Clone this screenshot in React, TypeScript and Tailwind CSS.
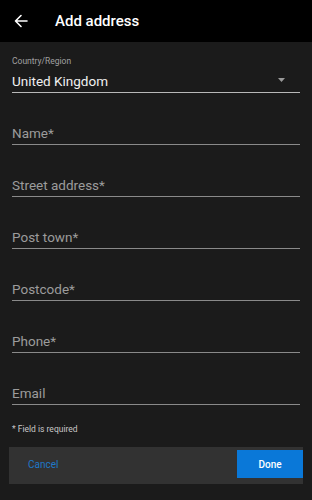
import React from "react";

const fields = ["Name*", "Street address*", "Post town*", "Postcode*", "Phone*", "Email"];

export default function App() {
  return (
    <div
      className="w-[312px] h-[500px] bg-[#1b1b1b] flex flex-col overflow-hidden"
      style={{ fontFamily: "Roboto, 'Liberation Sans', sans-serif" }}
    >
      <div className="h-[42px] bg-black flex items-center shrink-0">
        <svg className="ml-[14px]" width="14" height="14" viewBox="0 0 14 14" fill="none">
          <path d="M13 7H1.5M7 1.5L1.5 7L7 12.5" stroke="#ffffff" strokeWidth="1.6" strokeLinecap="round" strokeLinejoin="round" />
        </svg>
        <span className="ml-[27px] text-[15px] font-medium text-white leading-none">Add address</span>
      </div>
      <div className="px-3 flex flex-col">
        <div className="pt-[13px] text-[8.5px] leading-[12px] text-[#a0a0a0]">Country/Region</div>
        <div className="mt-[3px] h-[23px] flex items-end justify-between border-b border-[#b8b8b8] pb-[3px]">
          <span className="text-[13.5px] leading-[16px] text-[#f0f0f0]">United Kingdom</span>
          <svg className="mr-[15px] mb-[7px]" width="7" height="4" viewBox="0 0 7 4">
            <path d="M0 0H7L3.5 4Z" fill="#9a9a9a" />
          </svg>
        </div>
        {fields.map((f) => (
          <div key={f} className="h-[52px] flex items-end border-b border-[#8a8a8a] pb-[3px]">
            <span className="text-[13.5px] leading-[16px] text-[#9c9c9c]">{f}</span>
          </div>
        ))}
        <div className="mt-[18px] text-[8.5px] leading-[12px] text-[#c8c8c8]">* Field is required</div>
      </div>
      <div className="mt-[12px] mx-[9px] h-[37px] bg-[#323232] flex items-start justify-between">
        <span className="ml-[19px] mt-[12px] text-[10px] leading-[12px] text-[#1f78c8]">Cancel</span>
        <div className="h-[28px] w-[66px] bg-[#0a78d8] flex items-center justify-center mt-[3px]">
          <span className="text-[10px] font-medium text-white">Done</span>
        </div>
      </div>
    </div>
  );
}
